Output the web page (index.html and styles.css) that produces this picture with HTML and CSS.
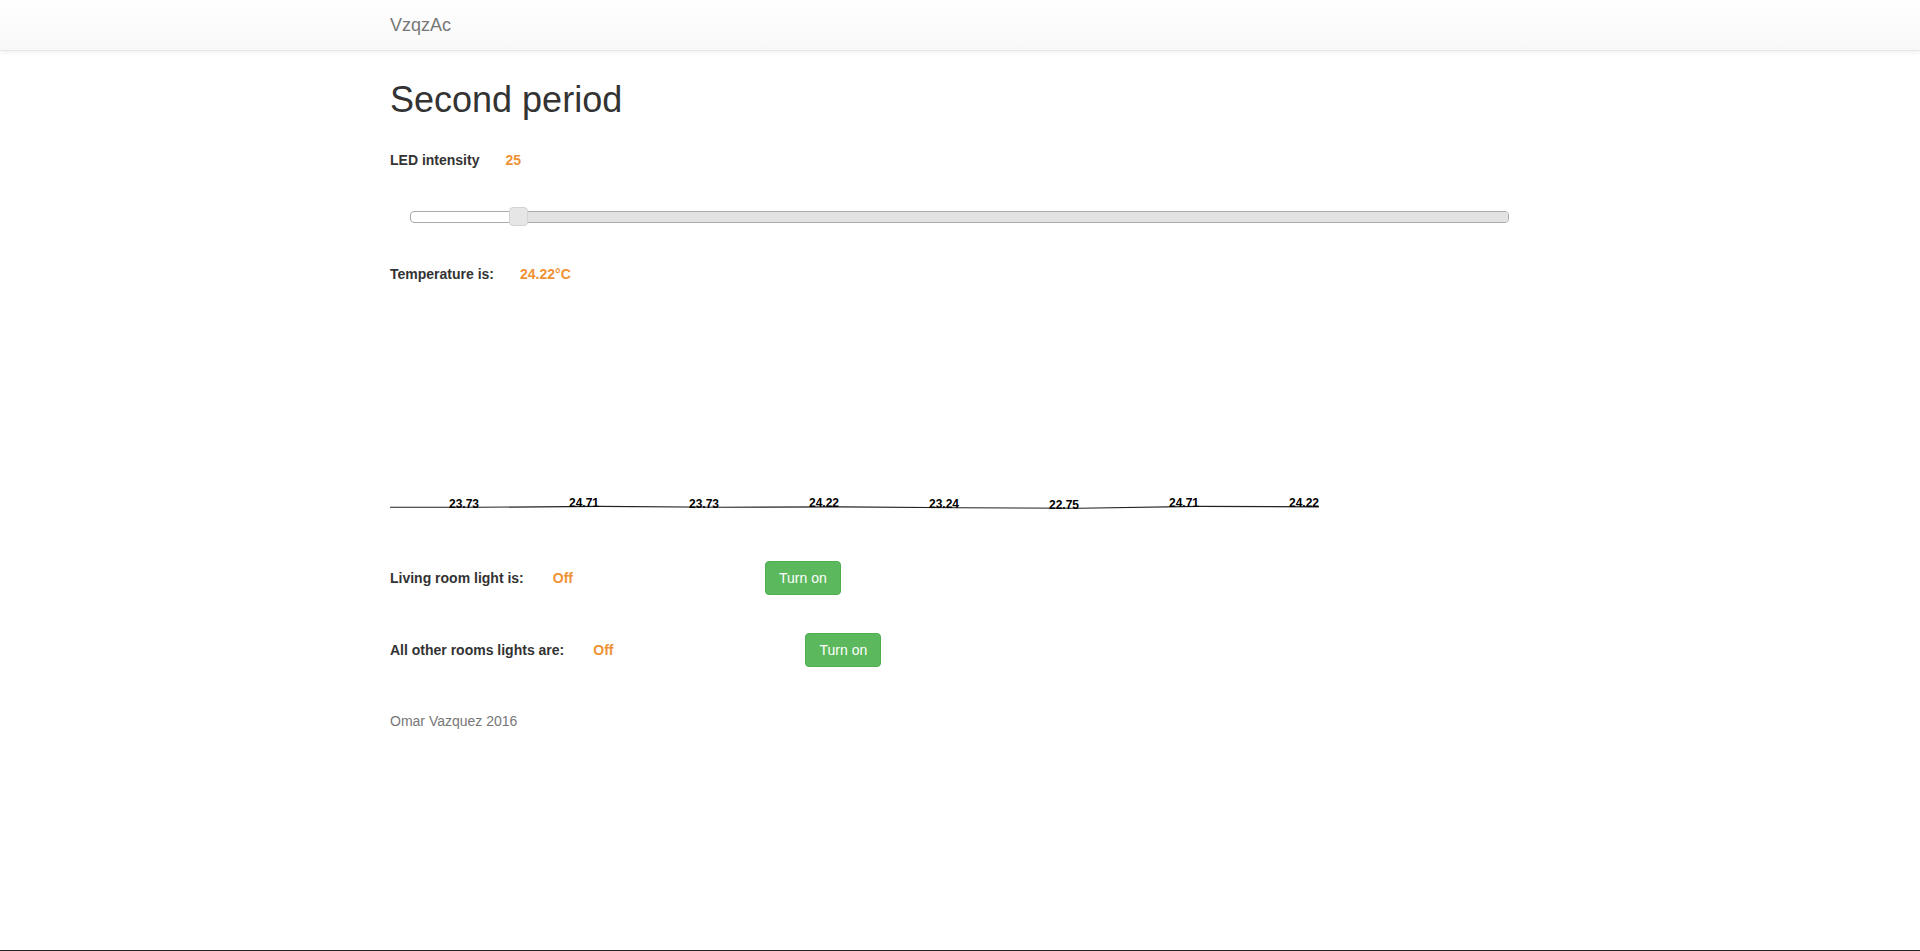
FILE: index.html
```html
<!DOCTYPE html>
<html>
<head>
<meta charset="utf-8">
<title>VzqzAc</title>
<link rel="stylesheet" href="styles.css">
</head>
<body>
<div class="page">
  <nav class="navbar">
    <div class="container">
      <a class="brand" href="#">VzqzAc</a>
    </div>
  </nav>
  <main class="container main">
    <h1 class="title">Second period</h1>
    <div class="row row-led">
      <span class="label">LED intensity</span>
      <span class="value">25</span>
    </div>
    <div class="slider">
      <div class="slider-range" style="left: 9.8%;"></div>
      <span class="slider-handle" style="left: 9.8%;"></span>
    </div>
    <div class="row row-temp">
      <span class="label">Temperature is:</span>
      <span class="value">24.22°C</span>
    </div>
    <svg class="chart" width="940" height="230" viewBox="0 0 940 230">
      <polyline class="chart-line" points="0,216.27 89,216.27 209,215.29 329,216.27 449,215.78 569,216.76 689,217.25 809,215.29 929,215.78"/>
      <g class="chart-labels">
        <text x="89" y="216.8">23.73</text>
        <text x="209" y="215.8">24.71</text>
        <text x="329" y="216.8">23.73</text>
        <text x="449" y="216.3">24.22</text>
        <text x="569" y="217.3">23.24</text>
        <text x="689" y="217.8">22.75</text>
        <text x="809" y="215.8">24.71</text>
        <text x="929" y="216.3">24.22</text>
      </g>
    </svg>
    <div class="row row-light row-living">
      <span class="label">Living room light is:</span>
      <span class="value">Off</span>
      <button class="btn">Turn on</button>
    </div>
    <div class="row row-light row-others">
      <span class="label">All other rooms lights are:</span>
      <span class="value">Off</span>
      <button class="btn">Turn on</button>
    </div>
    <footer class="footer">Omar Vazquez 2016</footer>
  </main>
</div>
</body>
</html>
```

FILE: styles.css
```css
* { box-sizing: border-box; }
html, body {
  margin: 0;
  padding: 0;
  background: #fff;
}
body {
  font-family: "Liberation Sans", Arial, sans-serif;
  font-size: 14px;
  line-height: 20px;
  color: #333;
}
.page {
  min-height: 951px;
  border-bottom: 1px solid #222;
}
.container {
  width: 1140px;
  margin: 0 auto;
}
.navbar {
  height: 51px;
  background: linear-gradient(to bottom, #fff 0, #f8f8f8 100%);
  border-bottom: 1px solid #e7e7e7;
  box-shadow: inset 0 1px 0 rgba(255,255,255,.15), 0 1px 5px rgba(0,0,0,.075);
}
.brand {
  display: inline-block;
  padding: 15px 0;
  font-size: 18px;
  line-height: 20px;
  color: #777;
  text-decoration: none;
  text-shadow: 0 1px 0 rgba(255,255,255,.25);
}
.main {
  padding-top: 29px;
}
.title {
  margin: 0;
  font-size: 36px;
  line-height: 40px;
  font-weight: 500;
  color: #333;
}
.row {
  display: flex;
  align-items: center;
}
.label {
  font-weight: bold;
  color: #333;
}
.value {
  margin-left: 26px;
  font-weight: bold;
  color: #ee9235;
}
.row-led { margin-top: 30px; }
.slider {
  position: relative;
  margin: 41px 21px 0 20px;
  height: 12px;
  border: 1px solid #aaa;
  border-radius: 4px;
  background: #fff;
}
.slider-range {
  position: absolute;
  top: 0;
  bottom: 0;
  right: 0;
  background: #e3e3e3;
  border-radius: 0 3px 3px 0;
}
.slider-handle {
  position: absolute;
  top: -5px;
  width: 19px;
  height: 19px;
  margin-left: -10px;
  background: #e6e6e6;
  border: 1px solid #d3d3d3;
  border-radius: 4px;
}
.row-temp { margin-top: 41px; }
.chart {
  display: block;
  margin-top: 7px;
  overflow: visible;
}
.chart-line {
  fill: none;
  stroke: #222;
  stroke-width: 1.2;
}
.chart-labels text {
  font-family: "Liberation Sans", Arial, sans-serif;
  font-size: 12px;
  font-weight: bold;
  fill: #000;
  text-anchor: end;
}
.row-living { margin-top: 40px; }
.row-others { margin-top: 38px; }
.row-light .value { margin-left: 29px; }
.btn {
  margin-left: 192px;
  height: 34px;
  padding: 6px 13px;
  font-family: "Liberation Sans", Arial, sans-serif;
  font-size: 14px;
  line-height: 20px;
  color: #fff;
  background: #5cb85c;
  border: 1px solid #4cae4c;
  border-radius: 4px;
  cursor: pointer;
}
.footer {
  margin-top: 44px;
  color: #777;
}
```
